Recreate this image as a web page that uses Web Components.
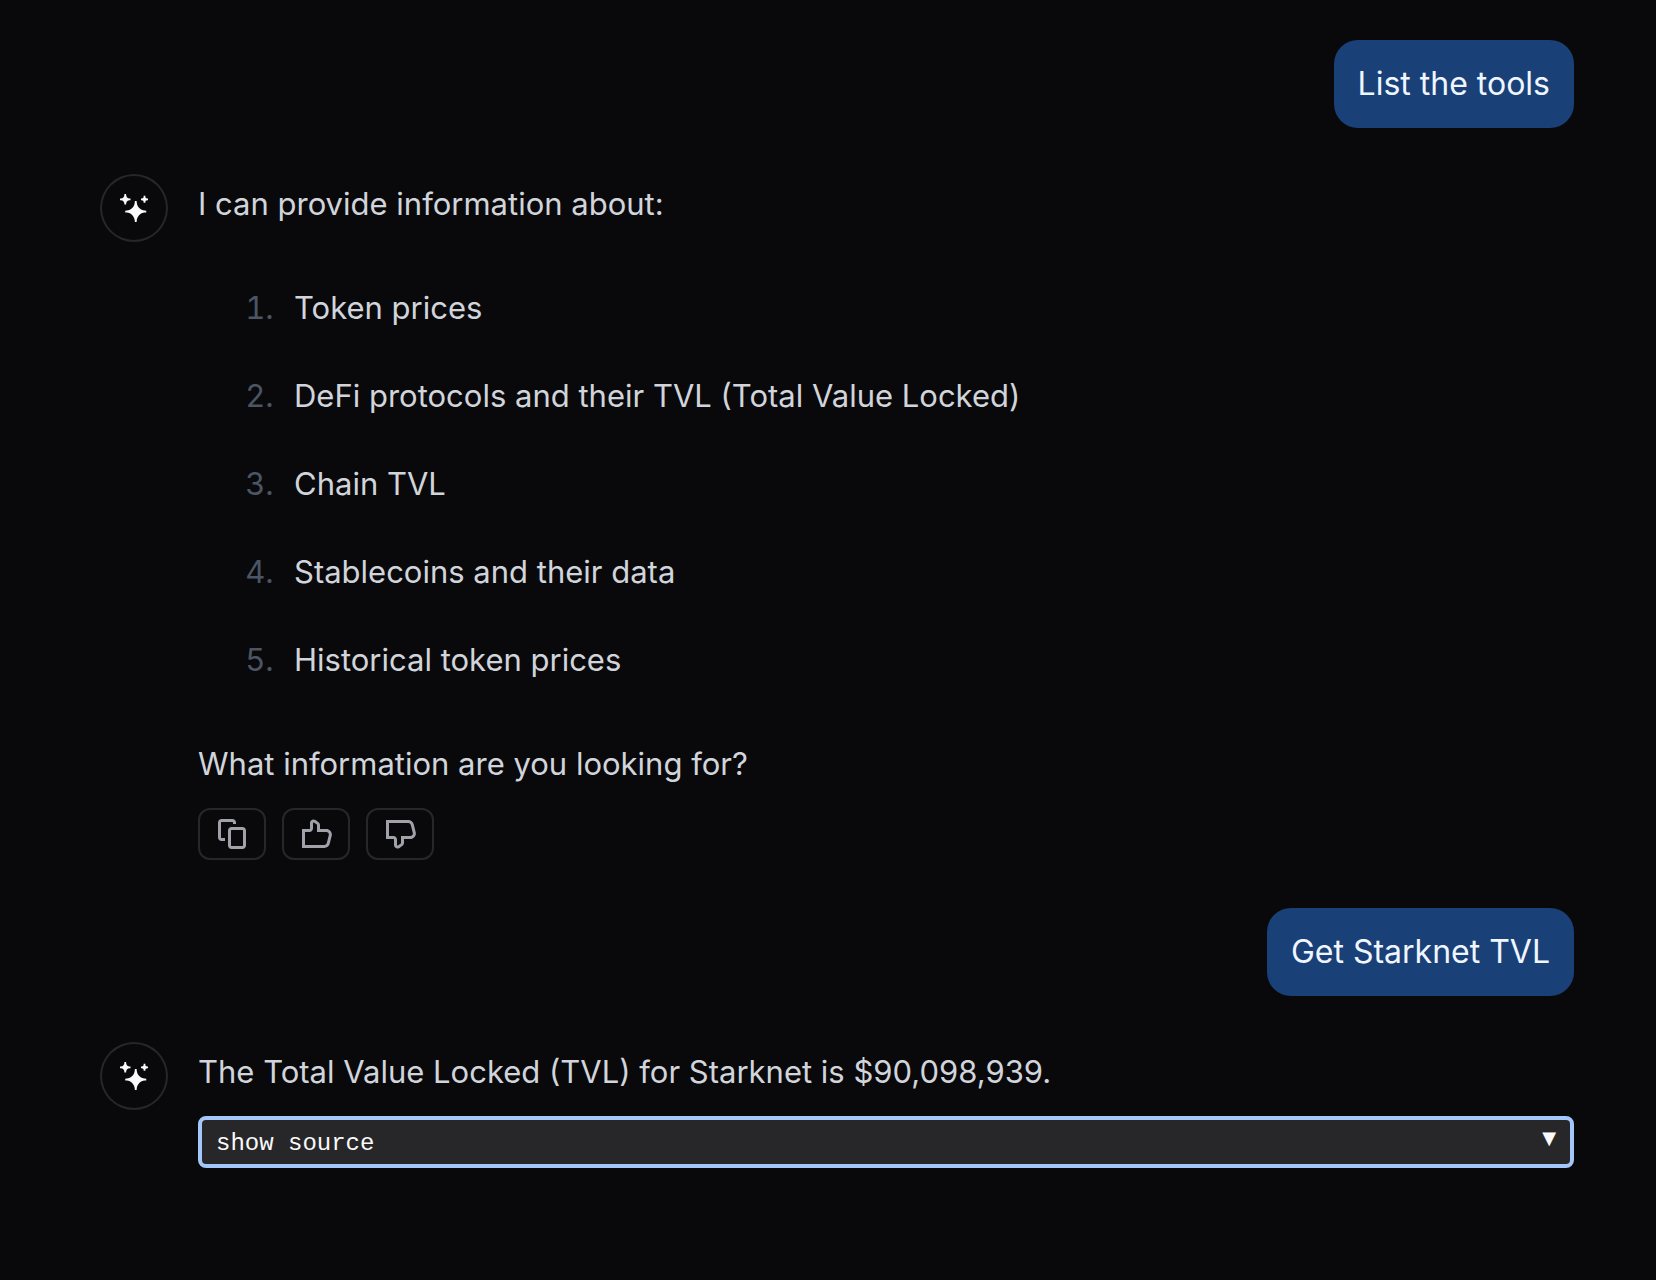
<!DOCTYPE html>
<html lang="en">
<head>
<meta charset="utf-8">
<title>Chat</title>
<style>
  body {
    margin: 0;
    background: #09090b;
    color: #d1d5db;
    font: 31px/56px Inter, "Liberation Sans", sans-serif;
  }
</style>
</head>
<body>
<chat-thread>
  <user-message>List the tools</user-message>
  <assistant-message>
    <message-text>I can provide information about:</message-text>
    <topic-list>
      <li>Token prices</li>
      <li>DeFi protocols and their TVL (Total Value Locked)</li>
      <li>Chain TVL</li>
      <li>Stablecoins and their data</li>
      <li>Historical token prices</li>
    </topic-list>
    <message-text>What information are you looking for?</message-text>
    <message-actions></message-actions>
  </assistant-message>
  <user-message>Get Starknet TVL</user-message>
  <assistant-message>
    <message-text>The Total Value Locked (TVL) for Starknet is $90,098,939.</message-text>
    <source-toggle>show source</source-toggle>
  </assistant-message>
</chat-thread>

<script>
  function define(name, html) {
    const template = document.createElement('template');
    template.innerHTML = html;
    customElements.define(name, class extends HTMLElement {
      constructor() {
        super();
        this.attachShadow({ mode: 'open' }).append(template.content.cloneNode(true));
      }
    });
  }

  define('chat-thread', `
    <style>
      :host { display: block; }
      main { display: flex; flex-direction: column; gap: 48px; padding: 40px 82px 112px 102px; }
    </style>
    <main><slot></slot></main>`);

  define('user-message', `
    <style>
      :host { display: flex; justify-content: flex-end; font-size: 32px; }
      div { padding: 16px 24px; border-radius: 24px; background: #1a4078; color: #eff6ff; }
    </style>
    <div><slot></slot></div>`);

  define('sparkle-avatar', `
    <style>
      :host {
        display: flex; flex: none; align-items: center; justify-content: center;
        width: 64px; height: 64px; border-radius: 50%;
        box-shadow: 0 0 0 2px #27272a; color: #fafafa;
      }
      svg { display: block; }
    </style>
    <svg width="28" height="28" viewBox="0 0 16 16" fill="currentColor" aria-hidden="true">
      <path d="M2.5 0.5V0H3.5V0.5C3.5 1.60457 4.39543 2.5 5.5 2.5H6V3V3.5H5.5C4.39543 3.5 3.5 4.39543 3.5 5.5V6H3H2.5V5.5C2.5 4.39543 1.60457 3.5 0.5 3.5H0V3V2.5H0.5C1.60457 2.5 2.5 1.60457 2.5 0.5Z"/>
      <path d="M14.5 4.5V5H13.5V4.5C13.5 3.94772 13.0523 3.5 12.5 3.5H12V3V2.5H12.5C13.0523 2.5 13.5 2.05228 13.5 1.5V1H14H14.5V1.5C14.5 2.05228 14.9477 2.5 15.5 2.5H16V3V3.5H15.5C14.9477 3.5 14.5 3.94772 14.5 4.5Z"/>
      <path d="M8.40706 4.92939L8.5 4H9.5L9.59294 4.92939C9.82973 7.29734 11.7027 9.17027 14.0706 9.40706L15 9.5V10.5L14.0706 10.5929C11.7027 10.8297 9.82973 12.7027 9.59294 15.0706L9.5 16H8.5L8.40706 15.0706C8.17027 12.7027 6.29734 10.8297 3.92939 10.5929L3 10.5V9.5L3.92939 9.40706C6.29734 9.17027 8.17027 7.29734 8.40706 4.92939Z"/>
    </svg>`);

  define('assistant-message', `
    <style>
      :host { display: flex; align-items: flex-start; gap: 32px; }
      .body { flex: 1; min-width: 0; }
    </style>
    <sparkle-avatar></sparkle-avatar>
    <div class="body"><slot></slot></div>`);

  define('message-text', `
    <style>
      :host { display: block; }
      p { margin: 0; }
    </style>
    <p><slot></slot></p>`);

  define('topic-list', `
    <style>
      :host { display: block; padding: 48px 0; }
      ol { display: flex; flex-direction: column; gap: 32px; margin: 0; padding: 0 0 0 84px; list-style: decimal; }
      ::slotted(li) { padding-left: 12px; }
      ::slotted(li)::marker { color: #4b5563; }
    </style>
    <ol><slot></slot></ol>`);

  define('message-actions', `
    <style>
      :host { display: flex; gap: 16px; padding-top: 16px; }
      button {
        display: flex; align-items: center; justify-content: center;
        width: 68px; height: 52px; padding: 0;
        border: 2px solid #27272a; border-radius: 12px;
        background: transparent; color: #a1a1aa; cursor: pointer;
      }
      svg { display: block; width: 32px; height: 32px; fill: currentColor; fill-rule: evenodd; }
    </style>
    <button type="button" aria-label="Copy">
      <svg viewBox="0 0 16 16"><path d="M2.75 0.5C1.7835 0.5 1 1.2835 1 2.25V9.75C1 10.7165 1.7835 11.5 2.75 11.5H3.75H4.5V10H3.75H2.75C2.61193 10 2.5 9.88807 2.5 9.75V2.25C2.5 2.11193 2.61193 2 2.75 2H8.25C8.38807 2 8.5 2.11193 8.5 2.25V3H10V2.25C10 1.2835 9.2165 0.5 8.25 0.5H2.75ZM7.75 4.5C6.7835 4.5 6 5.2835 6 6.25V13.75C6 14.7165 6.7835 15.5 7.75 15.5H13.25C14.2165 15.5 15 14.7165 15 13.75V6.25C15 5.2835 14.2165 4.5 13.25 4.5H7.75ZM7.5 6.25C7.5 6.11193 7.61193 6 7.75 6H13.25C13.3881 6 13.5 6.11193 13.5 6.25V13.75C13.5 13.8881 13.3881 14 13.25 14H7.75C7.61193 14 7.5 13.8881 7.5 13.75V6.25Z"/></svg>
    </button>
    <button type="button" aria-label="Upvote">
      <svg viewBox="0 0 16 16"><path d="M6.89531 2.23972C6.72984 2.12153 6.5 2.23981 6.5 2.44315V5.25001C6.5 6.21651 5.7165 7.00001 4.75 7.00001H2.5V13.5H12.1884C12.762 13.5 13.262 13.1096 13.4011 12.5532L14.4011 8.55318C14.5984 7.76425 14.0017 7.00001 13.1884 7.00001H9.25H8.5V6.25001V3.51458C8.5 3.43384 8.46101 3.35807 8.39531 3.31114L6.89531 2.23972ZM5 2.44315C5 1.01975 6.6089 0.191779 7.76717 1.01912L9.26717 2.09054C9.72706 2.41904 10 2.94941 10 3.51458V5.50001H13.1884C14.9775 5.50001 16.2903 7.18133 15.8563 8.91698L14.8563 12.917C14.5503 14.1412 13.4503 15 12.1884 15H1.75H1V14.25V6.25001V5.50001H1.75H4.75C4.88807 5.50001 5 5.38808 5 5.25001V2.44315Z"/></svg>
    </button>
    <button type="button" aria-label="Downvote">
      <svg viewBox="0 0 16 16"><path d="M6.89531 13.7603C6.72984 13.8785 6.5 13.7602 6.5 13.5569V10.75C6.5 9.7835 5.7165 9 4.75 9H2.5V2.5H12.1884C12.762 2.5 13.262 2.89037 13.4011 3.44683L14.4011 7.44683C14.5984 8.23576 14.0017 9 13.1884 9H9.25H8.5V9.75V12.4854C8.5 12.5662 8.46101 12.6419 8.39531 12.6889L6.89531 13.7603ZM5 13.5569C5 14.9803 6.6089 15.8082 7.76717 14.9809L9.26717 13.9095C9.72706 13.581 10 13.0506 10 12.4854V10.5H13.1884C14.9775 10.5 16.2903 8.81868 15.8563 7.08303L14.8563 3.08303C14.5503 1.85882 13.4503 1 12.1884 1H1.75H1V1.75V9.75V10.5H1.75H4.75C4.88807 10.5 5 10.6119 5 10.75V13.5569Z"/></svg>
    </button>`);

  define('source-toggle', `
    <style>
      :host { display: block; padding-top: 16px; }
      button {
        display: flex; align-items: flex-start; justify-content: space-between;
        width: 100%; height: 52px; padding: 8px 14px 4px;
        border: 4px solid #a3c7fb; border-radius: 8px;
        background: #27272a; color: #fafafa; cursor: pointer;
        font: 24px/32px "Liberation Mono", monospace;
      }
      .arrow { font: 18px/20px "DejaVu Sans", sans-serif; }
    </style>
    <button type="button" aria-expanded="false">
      <span><slot></slot></span>
      <span class="arrow">▼</span>
    </button>`);
</script>
</body>
</html>
